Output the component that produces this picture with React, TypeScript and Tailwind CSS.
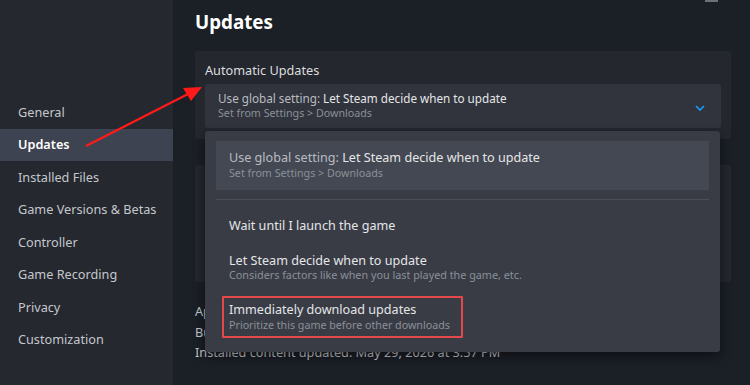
const navItems = [
  "General",
  "Updates",
  "Installed Files",
  "Game Versions & Betas",
  "Controller",
  "Game Recording",
  "Privacy",
  "Customization",
];

const Chevron = () => (
  <svg width="10" height="6" viewBox="0 0 10 6" fill="none">
    <path d="M1 1l4 4 4-4" stroke="#1a9fff" strokeWidth="1.6" />
  </svg>
);

export default function App() {
  return (
    <div
      className="relative flex w-[750px] h-[385px] overflow-hidden bg-[#1b1f26] text-[#dcdedf]"
      style={{ fontFamily: '"Noto Sans", "Open Sans", sans-serif' }}
    >
      {/* Sidebar */}
      <div className="w-[173px] shrink-0 bg-[#25282f] pt-[96px]">
        {navItems.map((item) => (
          <div
            key={item}
            className={
              item === "Updates"
                ? "h-[32.5px] flex items-center pl-[18px] text-[12.7px] font-semibold text-white bg-[#3d4350]"
                : "h-[32.5px] flex items-center pl-[18px] text-[12.7px] text-[#c4c7cc]"
            }
          >
            {item}
          </div>
        ))}
      </div>

      {/* Main */}
      <div className="relative flex-1 pl-[22px] pr-[19px]">
        <div className="h-[44px] flex items-center text-[18.8px] font-bold text-white">Updates</div>

        <div className="mt-[7px] bg-[#24272e] rounded-[3px] px-[10px] pt-[9px] pb-[11px]">
          <div className="text-[12.7px] leading-[20px] text-[#dcdedf]">Automatic Updates</div>
          <div className="mt-[4px] h-[44px] rounded-[3px] bg-[#31343c] pl-[13px] pr-[16px] flex items-center justify-between">
            <div className="leading-none">
              <div className="text-[11.7px] text-[#b8bcc2]">
                Use global setting: <span className="text-[#e4e6e8]">Let Steam decide when to update</span>
              </div>
              <div className="text-[10.7px] mt-[3px] text-[#8a9099]">Set from Settings &gt; Downloads</div>
            </div>
            <div className="pt-[3px]">
              <Chevron />
            </div>
          </div>
        </div>

        <div className="mt-[26px] h-[117px] bg-[#24272e] rounded-[3px]" />

        <div className="mt-[19px] text-[12.7px] leading-[20.5px] text-[#c4c7cc]">
          <div>App ID: 0000000</div>
          <div>Build ID: 00000000</div>
          <div>Installed content updated: May 29, 2026 at 3:57 PM</div>
        </div>

        {/* Dropdown menu */}
        <div className="absolute left-[32px] top-[131px] w-[515px] h-[221px] bg-[#393c45] rounded-[3px] shadow-[0_4px_12px_rgba(0,0,0,0.5)] px-[11px] pt-[10px]">
          <div className="h-[49px] bg-[#444852] pl-[13px] flex flex-col justify-center leading-none">
            <div className="text-[12.6px] text-[#b8bcc2]">
              Use global setting: <span className="text-[#e4e6e8]">Let Steam decide when to update</span>
            </div>
            <div className="text-[10.7px] mt-[3px] text-[#8a9099]">Set from Settings &gt; Downloads</div>
          </div>
          <div className="mt-[9px] h-px bg-[#4b4f59]" />
          <div className="mt-[20px] pl-[13px] text-[12.6px] leading-none text-[#e4e6e8]">Wait until I launch the game</div>
          <div className="mt-[22px] pl-[13px] leading-none">
            <div className="text-[12.6px] text-[#e4e6e8]">Let Steam decide when to update</div>
            <div className="text-[10.8px] mt-[3px] text-[#8a9099]">Considers factors like when you last played the game, etc.</div>
          </div>
          <div className="mt-[23px] pl-[13px] leading-none">
            <div className="text-[12.6px] text-[#e4e6e8]">Immediately download updates</div>
            <div className="text-[10.7px] mt-[3px] text-[#8a9099]">Prioritize this game before other downloads</div>
          </div>
        </div>

        {/* Highlight box */}
        <div className="absolute left-[49px] top-[296px] w-[241px] h-[42px] border-2 border-[#e5474b] rounded-[1px]" />
      </div>

      {/* Annotation arrow */}
      <svg className="absolute left-0 top-0 pointer-events-none" width="750" height="385">
        <line x1="86" y1="146" x2="190" y2="93" stroke="#ff1a1a" strokeWidth="2.2" />
        <polygon points="202,87 183,88 191,101" fill="#ff1a1a" />
      </svg>

      {/* Window control remnant */}
      <div className="absolute left-[705px] top-0 w-[13px] h-[2px] bg-[#6b7079]" />
    </div>
  );
}
